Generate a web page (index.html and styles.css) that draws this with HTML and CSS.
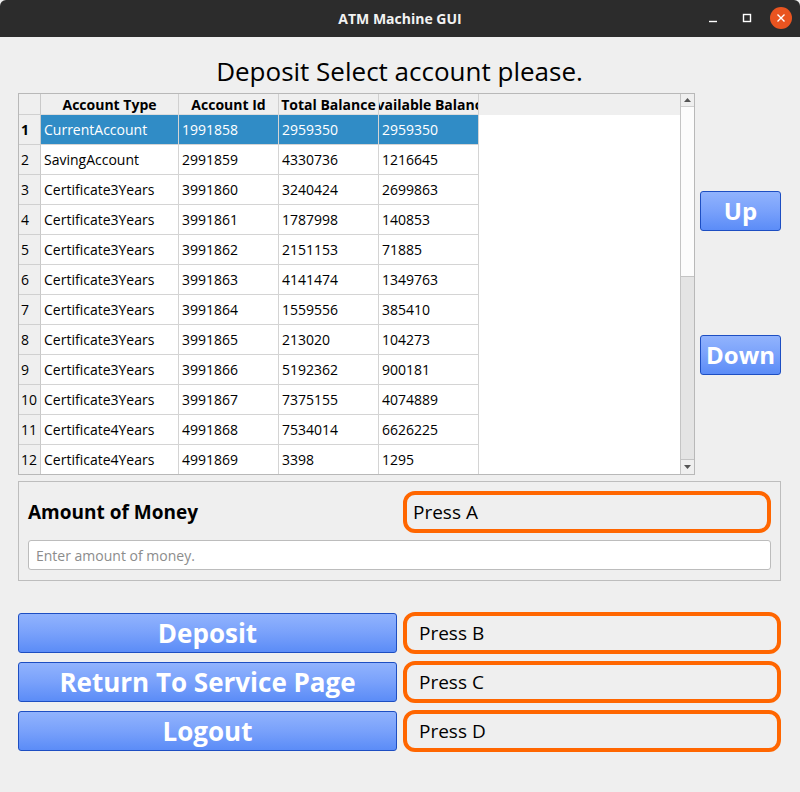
FILE: index.html
```html
<!DOCTYPE html>
<html>
<head>
<meta charset="utf-8">
<title>ATM Machine GUI</title>
<link rel="stylesheet" href="styles.css">
</head>
<body>
<div class="window">
  <header class="titlebar">
    <span class="title">ATM Machine GUI</span>
    <div class="controls">
      <span class="ctl"><svg width="12" height="12" viewBox="0 0 12 12"><line x1="2" y1="9.5" x2="10" y2="9.5" stroke="#fff" stroke-width="1.4"/></svg></span>
      <span class="ctl"><svg width="12" height="12" viewBox="0 0 12 12"><rect x="2.5" y="2.5" width="7" height="7" fill="none" stroke="#fff" stroke-width="1.4"/></svg></span>
      <span class="ctl close"><svg width="22" height="22" viewBox="0 0 22 22"><circle cx="11" cy="11" r="11" fill="#e95420"/><path d="M7.5 7.5 L14.5 14.5 M14.5 7.5 L7.5 14.5" stroke="#fff" stroke-width="1.4"/></svg></span>
    </div>
  </header>

  <main class="content">
    <h1 class="heading">Deposit Select account please.</h1>

    <section class="table-row">
      <div class="table-frame">
        <div class="table-view">
          <div class="row header">
            <div class="cell vh"></div>
            <div class="cell hh">Account Type</div>
            <div class="cell hh">Account Id</div>
            <div class="cell hh">Total Balance</div>
            <div class="cell hh">Available Balance</div>
          </div>
          <div class="row selected">
            <div class="cell vh bold">1</div><div class="cell">CurrentAccount</div><div class="cell">1991858</div><div class="cell">2959350</div><div class="cell">2959350</div>
          </div>
          <div class="row">
            <div class="cell vh">2</div><div class="cell">SavingAccount</div><div class="cell">2991859</div><div class="cell">4330736</div><div class="cell">1216645</div>
          </div>
          <div class="row">
            <div class="cell vh">3</div><div class="cell">Certificate3Years</div><div class="cell">3991860</div><div class="cell">3240424</div><div class="cell">2699863</div>
          </div>
          <div class="row">
            <div class="cell vh">4</div><div class="cell">Certificate3Years</div><div class="cell">3991861</div><div class="cell">1787998</div><div class="cell">140853</div>
          </div>
          <div class="row">
            <div class="cell vh">5</div><div class="cell">Certificate3Years</div><div class="cell">3991862</div><div class="cell">2151153</div><div class="cell">71885</div>
          </div>
          <div class="row">
            <div class="cell vh">6</div><div class="cell">Certificate3Years</div><div class="cell">3991863</div><div class="cell">4141474</div><div class="cell">1349763</div>
          </div>
          <div class="row">
            <div class="cell vh">7</div><div class="cell">Certificate3Years</div><div class="cell">3991864</div><div class="cell">1559556</div><div class="cell">385410</div>
          </div>
          <div class="row">
            <div class="cell vh">8</div><div class="cell">Certificate3Years</div><div class="cell">3991865</div><div class="cell">213020</div><div class="cell">104273</div>
          </div>
          <div class="row">
            <div class="cell vh">9</div><div class="cell">Certificate3Years</div><div class="cell">3991866</div><div class="cell">5192362</div><div class="cell">900181</div>
          </div>
          <div class="row">
            <div class="cell vh">10</div><div class="cell">Certificate3Years</div><div class="cell">3991867</div><div class="cell">7375155</div><div class="cell">4074889</div>
          </div>
          <div class="row">
            <div class="cell vh">11</div><div class="cell">Certificate4Years</div><div class="cell">4991868</div><div class="cell">7534014</div><div class="cell">6626225</div>
          </div>
          <div class="row">
            <div class="cell vh">12</div><div class="cell">Certificate4Years</div><div class="cell">4991869</div><div class="cell">3398</div><div class="cell">1295</div>
          </div>
        </div>
        <div class="scrollbar">
          <div class="sb-btn up"><svg width="7" height="4" viewBox="0 0 7 4"><path d="M0 4 L3.5 0 L7 4 Z" fill="#555"/></svg></div>
          <div class="sb-handle"></div>
          <div class="sb-track"></div>
          <div class="sb-btn down"><svg width="7" height="4" viewBox="0 0 7 4"><path d="M0 0 L3.5 4 L7 0 Z" fill="#555"/></svg></div>
        </div>
      </div>
      <div class="side">
        <button class="btn blue side-btn">Up</button>
        <button class="btn blue side-btn">Down</button>
      </div>
    </section>

    <section class="groupbox">
      <div class="amount-label">Amount of Money</div>
      <div class="press">Press A</div>
      <input class="amount-input" type="text" placeholder="Enter amount of money.">
    </section>

    <section class="actions">
      <button class="btn blue action">Deposit</button>
      <div class="press">Press B</div>
      <button class="btn blue action">Return To Service Page</button>
      <div class="press">Press C</div>
      <button class="btn blue action">Logout</button>
      <div class="press">Press D</div>
    </section>
  </main>
</div>
</body>
</html>
```

FILE: styles.css
```css
* { box-sizing: border-box; }

html, body {
  margin: 0;
  padding: 0;
}

body {
  width: 800px;
  height: 792px;
  background: #efefef;
  font-family: "Open Sans", "Noto Sans", "DejaVu Sans", sans-serif;
  color: #000;
  overflow: hidden;
}

.window {
  width: 800px;
  height: 792px;
  display: flex;
  flex-direction: column;
}

.titlebar {
  height: 37px;
  background: #2c2c2c;
  display: flex;
  align-items: center;
  justify-content: center;
  position: relative;
  border-radius: 6px 6px 0 0;
}

.title {
  color: #f2f2f2;
  font-size: 14px;
  font-weight: 700;
}

.controls {
  position: absolute;
  right: 8px;
  top: 7px;
  display: flex;
  align-items: center;
}

.ctl {
  width: 34px;
  height: 22px;
  display: flex;
  align-items: center;
  justify-content: center;
}

.ctl.close {
  width: 22px;
  margin-left: 6px;
}

.content {
  padding: 0 19px 0 18px;
  display: flex;
  flex-direction: column;
}

.heading {
  margin: 0;
  height: 56px;
  padding-top: 18px;
  font-size: 26px;
  line-height: 32px;
  font-weight: 400;
  text-align: center;
}

/* Table */
.table-row {
  display: flex;
  height: 382px;
}

.table-frame {
  width: 677px;
  height: 382px;
  border: 1px solid #b8b8b8;
  background: #fff;
  display: flex;
}

.table-view {
  flex: 1;
  overflow: hidden;
}

.row {
  display: grid;
  grid-template-columns: 22px 138px 100px 100px 100px;
  height: 30px;
  font-size: 14px;
}

.row.header {
  height: 21px;
  background: #efefef;
}

.cell {
  border-right: 1px solid #d4d4d4;
  border-bottom: 1px solid #d4d4d4;
  padding-left: 3px;
  display: flex;
  align-items: center;
  white-space: nowrap;
  overflow: hidden;
}

.cell.vh {
  background: #efefef;
  padding-left: 2px;
  border-right-color: #c9c9c9;
  border-bottom-color: #d0d0d0;
}

.cell.bold { font-weight: 700; }

.cell.hh {
  justify-content: center;
  padding-left: 0;
  font-weight: 700;
  font-size: 14px;
  background: #efefef;
  border-right-color: #d0d0d0;
  border-bottom-color: #dcdcdc;
}

.row.selected .cell:not(.vh) {
  background: #308cc6;
  color: #fff;
}

.scrollbar {
  width: 14px;
  border-left: 1px solid #c4c4c4;
  display: flex;
  flex-direction: column;
  background: #e4e4e4;
}

.sb-btn {
  background: #efefef;
  display: flex;
  align-items: center;
  justify-content: center;
}

.sb-btn.up { border-bottom: 1px solid #d0d0d0; height: 13px; }
.sb-btn.down { border-top: 1px solid #c4c4c4; height: 15px; }

.sb-handle {
  height: 170px;
  background: #fcfcfc;
  border-bottom: 1px solid #c4c4c4;
}

.sb-track {
  flex: 1;
  background: #e4e4e4;
}

.side {
  flex: 1;
  display: flex;
  flex-direction: column;
  align-items: flex-end;
  padding-top: 98px;
  gap: 104px;
}

/* Buttons */
.btn {
  font-family: inherit;
  border: 1px solid #1d4ec2;
  border-radius: 3px;
  color: #fff;
  font-weight: 700;
  cursor: pointer;
  padding: 0;
}

.blue {
  background: linear-gradient(to bottom, #91b3fd 0%, #79a1fb 50%, #5b8cf7 100%);
}

.side-btn {
  width: 81px;
  height: 40px;
  font-size: 24px;
  line-height: 1;
}

/* Group box */
.groupbox {
  margin-top: 6px;
  height: 100px;
  border: 1px solid #bdbdbd;
  padding: 9px 8px 0 9px;
  display: grid;
  grid-template-columns: 1fr 1fr;
  grid-template-rows: 42px 30px;
  column-gap: 6px;
  row-gap: 7px;
}

.amount-label {
  font-size: 19px;
  font-weight: 700;
  display: flex;
  align-items: center;
}

.press {
  border: 4px solid #ff6600;
  border-radius: 12px;
  font-size: 19px;
  display: flex;
  align-items: center;
  padding-left: 6px;
}

.groupbox .press {
  margin-right: 1px;
}

.amount-input {
  grid-column: 1 / 3;
  height: 30px;
  margin-right: 1px;
  border: 1px solid #bcbcbc;
  border-radius: 3px;
  background: #fff;
  font-family: inherit;
  font-size: 14px;
  padding: 0 7px;
  outline: none;
}

.amount-input::placeholder {
  color: #8c8c8c;
}

/* Actions */
.actions {
  margin-top: 31px;
  display: grid;
  grid-template-columns: 379px 1fr;
  grid-auto-rows: 42px;
  column-gap: 6px;
  row-gap: 7px;
}

.action {
  height: 40px;
  margin-top: 1px;
  font-size: 26px;
}

.actions .press {
  padding-left: 12px;
}
```
